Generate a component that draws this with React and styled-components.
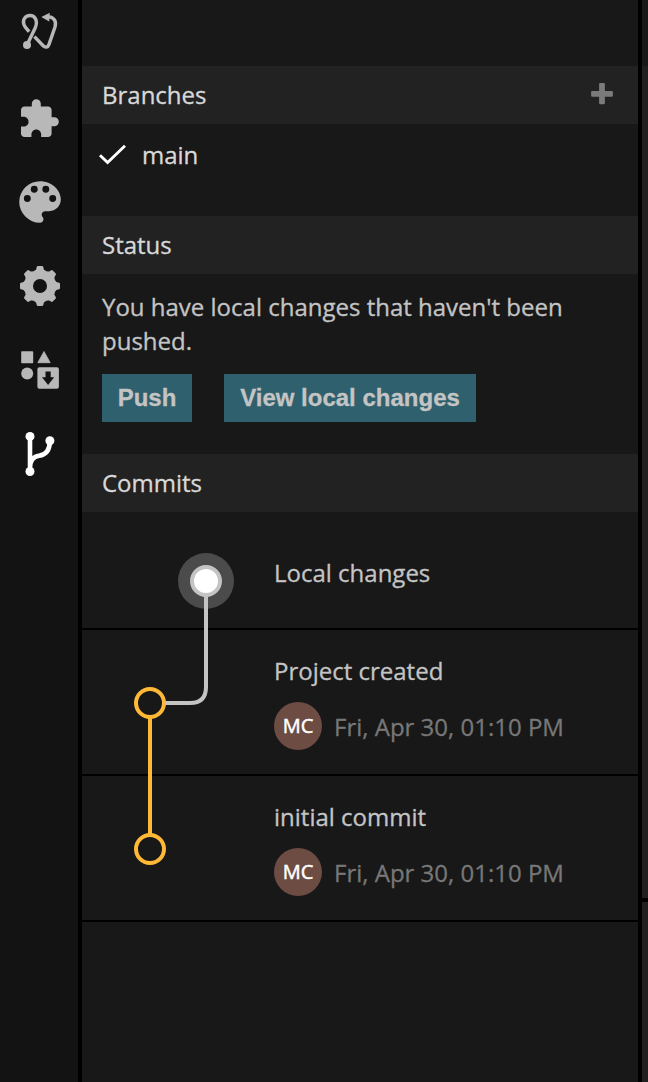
import React from "react";
import styled, { createGlobalStyle } from "styled-components";

const Global = createGlobalStyle`
  * { box-sizing: border-box; }
  body {
    margin: 0;
    background: #000;
    font-family: "Open Sans", "Noto Sans", sans-serif;
    font-size: 24px;
    line-height: 34px;
    color: #c4c4c4;
    -webkit-text-stroke: 0.3px currentColor;
  }
`;

const Shell = styled.div`
  display: flex;
  gap: 4px;
  width: 648px;
  height: 1082px;
  overflow: hidden;
  background: #000;
`;

const Sidebar = styled.nav`
  flex: 0 0 78px;
  display: flex;
  flex-direction: column;
  align-items: center;
  gap: 36px;
  padding: 10px 0 0 2px;
  background: #131313;
`;

const IconSlot = styled.div`
  width: 48px;
  height: 48px;
  svg { display: block; }
`;

const Panel = styled.main`
  flex: 0 0 556px;
  background: #181818;
`;

const Spacer = styled.div`
  height: 66px;
`;

const SectionHeader = styled.header`
  display: flex;
  align-items: center;
  justify-content: space-between;
  height: 58px;
  padding: 0 24px 0 20px;
  background: #222;
  color: #d8d8d8;
`;

const AddButton = styled.button`
  padding: 0;
  border: 0;
  background: none;
  svg { display: block; margin-top: -3px; }
`;

const BranchRow = styled.div`
  display: flex;
  align-items: center;
  gap: 16px;
  height: 62px;
  margin-bottom: 30px;
  padding-left: 16px;
  color: #d8d8d8;
`;

const Status = styled.section`
  height: 180px;
  padding: 16px 20px 0;
`;

const Message = styled.p`
  margin: 0 0 16px;
`;

const Actions = styled.div`
  display: flex;
  gap: 32px;
`;

const Action = styled.button`
  width: ${(p) => p.$width}px;
  height: 48px;
  padding: 0;
  border: 0;
  background: #2f606d;
  color: #c4c4c4;
  font: bold 24px/48px "Liberation Sans", Arial, sans-serif;
  white-space: nowrap;
`;

const CommitList = styled.section`
  position: relative;
`;

const Graph = styled.svg`
  position: absolute;
  left: 0;
  top: 0;
  pointer-events: none;
`;

const Commit = styled.article`
  height: ${(p) => p.$height}px;
  padding: ${(p) => p.$top}px 0 0 192px;
  border-bottom: 2px solid #000;
`;

const Meta = styled.div`
  display: flex;
  align-items: center;
  gap: 12px;
  margin-top: 14px;
  color: #777;
`;

const Avatar = styled.span`
  display: flex;
  align-items: center;
  justify-content: center;
  width: 48px;
  height: 48px;
  border-radius: 50%;
  background: #6d4c43;
  color: #fff;
  font-size: 20px;
  -webkit-text-stroke: 0.5px #fff;
`;

const DateText = styled.span`
  padding-top: 2px;
`;

const Edge = styled.div`
  flex: 0 0 6px;
  display: flex;
  flex-direction: column;
  gap: 4px;
`;

const EdgePane = styled.div`
  height: ${(p) => p.$height}px;
  background: ${(p) => p.$color};
`;

const EdgeGroup = styled.div`
  height: 898px;
`;

const GRAY = "#b8b8b8";

const Icon = ({ top, children }) => (
  <IconSlot>
    <svg width="48" height="48" viewBox={`16 ${top} 48 48`}>{children}</svg>
  </IconSlot>
);

const Logo = () => (
  <Icon top={10}>
    <g fill="none" stroke={GRAY} strokeWidth="3.4" strokeLinejoin="round">
      <path d="M27 45 L35.4 27.500 C38 20.500 35 15.500 30 15.500 C25 15.500 22.300 20 23.900 24.500 C24.800 27.500 27 29.300 29.200 31.600" />
      <path d="M34.400 36.600 L43.200 45.800 C45.400 48 48 47.400 49 44.400 L55 27 C56.800 21 53.500 17.200 49 16.900" />
    </g>
    <circle cx="27" cy="45" r="4" fill={GRAY} />
    <path d="M41.300 16.900 L49.800 12.800 L49.200 21.500 Z" fill={GRAY} />
  </Icon>
);

const Puzzle = () => (
  <Icon top={94}>
    <path
      transform="translate(17.4 97.4) scale(1.8)"
      fill={GRAY}
      d="M20.5 11H19V7c0-1.100-.9-2-2-2h-4V3.500a2.500 2.500 0 0 0-5 0V5H4c-1.100 0-1.990.9-1.990 2v3.800H3.500c1.490 0 2.700 1.210 2.700 2.700s-1.210 2.700-2.700 2.700H2V20c0 1.100.9 2 2 2h3.800v-1.500c0-1.490 1.210-2.700 2.700-2.700s2.700 1.210 2.700 2.700V22H17c1.100 0 2-.9 2-2v-4h1.500a2.500 2.500 0 0 0 0-5z"
    />
  </Icon>
);

const Palette = () => (
  <Icon top={178}>
    <path
      transform="translate(12.3 174.2) scale(2.31)"
      fill={GRAY}
      d="M12 3a9 9 0 0 0 0 18c.83 0 1.500-.67 1.500-1.500 0-.39-.15-.74-.39-1.010-.23-.26-.38-.61-.38-.99 0-.83.67-1.500 1.500-1.500H16c2.760 0 5-2.240 5-5 0-4.420-4.030-8-9-8zm-5.500 9a1.500 1.500 0 1 1 0-3 1.500 1.500 0 0 1 0 3zm3-4a1.500 1.500 0 1 1 0-3 1.500 1.500 0 0 1 0 3zm5 0a1.500 1.500 0 1 1 0-3 1.500 1.500 0 0 1 0 3zm3 4a1.500 1.500 0 1 1 0-3 1.500 1.500 0 0 1 0 3z"
    />
  </Icon>
);

const Gear = () => (
  <Icon top={262}>
    <g transform="translate(40 286)">
      <circle r="11.500" fill="none" stroke={GRAY} strokeWidth="9" />
      {[0, 45, 90, 135, 180, 225, 270, 315].map((a) => (
        <path
          key={a}
          transform={`rotate(${a})`}
          fill={GRAY}
          d="M-6.300 -13 L-5.500 -15.400 C-4.300 -15.900 -3.900 -16.200 -3.700 -17.300 L-3.200 -19.200 Q-2.900 -20 -2 -20 H2 Q2.900 -20 3.200 -19.200 L3.700 -17.300 C3.900 -16.200 4.300 -15.900 5.500 -15.400 L6.300 -13 Z"
        />
      ))}
    </g>
  </Icon>
);

const Components = () => (
  <Icon top={346}>
    <g fill={GRAY}>
      <rect x="21.200" y="351.200" width="12" height="12" rx="0.800" />
      <path d="M44 351.500 L50.200 362.700 H37.800 Z" stroke={GRAY} strokeWidth="0.800" strokeLinejoin="round" />
      <circle cx="27.200" cy="373.500" r="6" />
      <rect x="37.400" y="367.300" width="21.500" height="21.500" rx="2" />
    </g>
    <path d="M45.500 371.500 H50.700 V377.300 H54.200 L48.100 385 L42 377.300 H45.500 Z" fill="#131313" />
  </Icon>
);

const VersionControl = () => (
  <Icon top={430}>
    <path
      d="M30 436 V471 M30 468 C30 459.500 34 456.500 39 455.800 C46.500 454.800 49.800 450 49.800 441"
      fill="none"
      stroke="#fff"
      strokeWidth="4.600"
    />
    <circle cx="30" cy="436.400" r="4.500" fill="#fff" />
    <circle cx="49.900" cy="440.800" r="4.500" fill="#fff" />
    <circle cx="30" cy="471.500" r="4.500" fill="#fff" />
  </Icon>
);

const CommitGraph = () => (
  <Graph width="180" height="410" viewBox="82 512 180 410" fill="none" strokeWidth="4">
    <circle cx="206" cy="581" r="28" fill="#4b4b4b" />
    <path d="M206 595 V687 Q206 703 190 703 H165" stroke="#c4c4c4" />
    <circle cx="206" cy="581" r="14" fill="#fff" stroke="#c4c4c4" />
    <path d="M150 717 V835" stroke="#ffb937" />
    <circle cx="150" cy="703" r="14" stroke="#ffb937" />
    <circle cx="150" cy="849" r="14" stroke="#ffb937" />
  </Graph>
);

const commits = ["Project created", "initial commit"];

export default function App() {
  return (
    <>
      <Global />
      <Shell>
        <Sidebar>
          <Logo />
          <Puzzle />
          <Palette />
          <Gear />
          <Components />
          <VersionControl />
        </Sidebar>
        <Panel>
          <Spacer />
          <SectionHeader>
            Branches
            <AddButton aria-label="Add branch">
              <svg width="24" height="24" viewBox="0 0 24 24">
                <path
                  d="M10.200 1 h3.600 q1.100 0 1.100 1.100 v6.900 h6.900 q1.100 0 1.100 1.100 v3.600 q0 1.100 -1.100 1.100 h-6.900 v6.400 q0 1.100 -1.100 1.100 h-3.600 q-1.100 0 -1.100 -1.100 v-6.400 h-6.900 q-1.100 0 -1.100 -1.100 v-3.600 q0 -1.100 1.100 -1.100 h6.900 v-6.900 q0 -1.100 1.100 -1.100 z"
                  fill="#7b7b7b"
                />
              </svg>
            </AddButton>
          </SectionHeader>
          <BranchRow>
            <svg width="28" height="22" viewBox="98 144 28 22">
              <path d="M100 155.200 L107.600 162.500 L125 145.800" fill="none" stroke="#fff" strokeWidth="2.900" />
            </svg>
            main
          </BranchRow>
          <SectionHeader>Status</SectionHeader>
          <Status>
            <Message>You have local changes that haven't been pushed.</Message>
            <Actions>
              <Action $width={90}>Push</Action>
              <Action $width={252}>View local changes</Action>
            </Actions>
          </Status>
          <SectionHeader>Commits</SectionHeader>
          <CommitList>
            <Commit $height={118} $top={44}>Local changes</Commit>
            {commits.map((title) => (
              <Commit key={title} $height={146} $top={24}>
                {title}
                <Meta>
                  <Avatar>MC</Avatar>
                  <DateText>Fri, Apr 30, 01:10 PM</DateText>
                </Meta>
              </Commit>
            ))}
            <CommitGraph />
          </CommitList>
        </Panel>
        <Edge>
          <EdgeGroup>
            <EdgePane $height={66} $color="#181818" />
            <EdgePane $height={832} $color="#202020" />
          </EdgeGroup>
          <EdgePane $height={180} $color="#202020" />
        </Edge>
      </Shell>
    </>
  );
}
